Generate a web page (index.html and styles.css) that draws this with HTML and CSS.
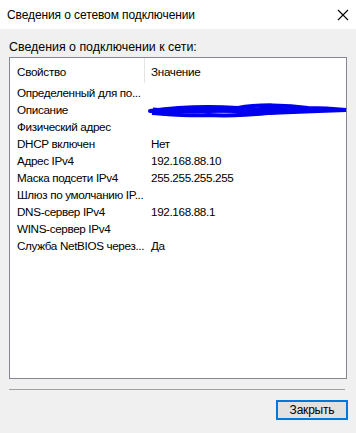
FILE: index.html
```html
<!DOCTYPE html>
<html lang="ru">
<head>
<meta charset="utf-8">
<link rel="stylesheet" href="styles.css">
</head>
<body>
<div class="window">
  <div class="titlebar">
    <span class="title">Сведения о сетевом подключении</span>
    <svg class="close" width="12" height="12" viewBox="0 0 12 12"><path d="M1 1 L11 11 M11 1 L1 11" stroke="#000" stroke-width="1.1" fill="none"/></svg>
  </div>
  <div class="content">
    <div class="label">Сведения о подключении к сети:</div>
    <div class="list">
      <div class="header">
        <div class="hcell c1">Свойство</div>
        <div class="hcell c2">Значение</div>
      </div>
      <div class="rows">
        <div class="row"><span class="c1">Определенный для по...</span><span class="c2"></span></div>
        <div class="row"><span class="c1">Описание</span><span class="c2">
          <svg class="scribble" width="200" height="16" viewBox="0 0 200 16"><path d="M2 9 C30 5 60 4 90 6 C110 2 140 3 160 6 C175 6 188 7 198 8 C170 9 150 10 120 11 C100 13 80 14 60 13 C40 14 20 12 4 11 C30 9 60 8 100 9 C130 8 160 7 190 8" stroke="#0000ee" stroke-width="4" fill="none" stroke-linecap="round"/><path d="M5 7 L40 10 L80 9 L120 6 L170 8 M20 12 L60 7 L110 12 L150 9" stroke="#0000ee" stroke-width="3" fill="none"/></svg>
        </span></div>
        <div class="row"><span class="c1">Физический адрес</span><span class="c2"></span></div>
        <div class="row"><span class="c1">DHCP включен</span><span class="c2">Нет</span></div>
        <div class="row"><span class="c1">Адрес IPv4</span><span class="c2">192.168.88.10</span></div>
        <div class="row"><span class="c1">Маска подсети IPv4</span><span class="c2">255.255.255.255</span></div>
        <div class="row"><span class="c1">Шлюз по умолчанию IP...</span><span class="c2"></span></div>
        <div class="row"><span class="c1">DNS-сервер IPv4</span><span class="c2">192.168.88.1</span></div>
        <div class="row"><span class="c1">WINS-сервер IPv4</span><span class="c2"></span></div>
        <div class="row"><span class="c1">Служба NetBIOS через...</span><span class="c2">Да</span></div>
      </div>
    </div>
    <div class="sep"></div>
    <div class="buttons">
      <button class="btn">Закрыть</button>
    </div>
  </div>
</div>
</body>
</html>
```

FILE: styles.css
```css
* { box-sizing: border-box; }
html, body { margin: 0; padding: 0; }
body {
  width: 356px;
  height: 433px;
  background: #f0f0f0;
  font-family: "Liberation Sans", Arial, sans-serif;
  font-size: 12px;
  color: #000;
  overflow: hidden;
}
.titlebar {
  height: 29px;
  background: #fff;
  display: flex;
  align-items: center;
  justify-content: space-between;
  padding: 0 7px 0 7px;
}
.title { font-size: 12px; letter-spacing: -0.1px; }
.content { padding: 0 9px 0 9px; }
.label {
  height: 28px;
  padding-top: 11px;
  line-height: 15px;
  font-size: 12.4px;
}
.list {
  width: 338px;
  height: 322px;
  background: #fff;
  border: 1px solid #828790;
}
.header {
  display: flex;
  height: 25px;
  align-items: stretch;
  font-size: 11.7px;
  letter-spacing: -0.3px;
}
.hcell { display: flex; align-items: center; padding-top: 1px; }
.hcell.c1 { width: 135px; padding-left: 7px; border-right: 1px solid #e5e5e5; }
.hcell.c2 { flex: 1; padding-left: 6px; }
.rows { padding-top: 1px; }
.row {
  display: flex;
  height: 17px;
  line-height: 17px;
  white-space: nowrap;
  font-size: 11.7px;
  letter-spacing: -0.35px;
}
.row .c1 { width: 135px; padding-left: 7px; overflow: hidden; }
.row .c2 { flex: 1; padding-left: 6px; position: relative; }
.scribble { position: absolute; left: 3px; top: 1px; }
.sep {
  margin-top: 10px;
  width: 336px;
  height: 1px;
  background: #a0a0a0;
}
.buttons {
  display: flex;
  justify-content: flex-end;
  padding-top: 10px;
}
.btn {
  width: 72px;
  height: 20px;
  background: #e1e1e1;
  border: 2px solid #0078d7;
  font-family: "Liberation Sans", Arial, sans-serif;
  font-size: 12px;
  letter-spacing: -0.2px;
  padding: 0;
  color: #000;
  margin-right: -1px;
}
```
